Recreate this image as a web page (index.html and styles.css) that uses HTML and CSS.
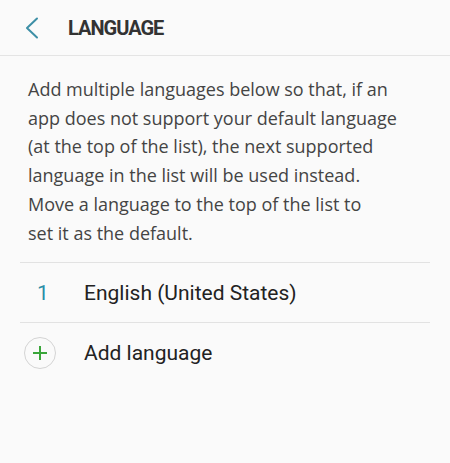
FILE: index.html
```html
<!DOCTYPE html>
<html lang="en">
<head>
  <meta charset="UTF-8">
  <meta name="viewport" content="width=device-width, initial-scale=1.0">
  <title>Language</title>
  <link rel="stylesheet" href="styles.css">
</head>
<body>

  <!-- Top bar -->
  <header class="app-bar">
    <button class="back-btn" type="button" aria-label="Back">
      <svg width="16" height="22" viewBox="0 0 16 22">
        <polyline points="13,1.5 3,11 13,20.5" fill="none" stroke="#3d8fa6" stroke-width="2" stroke-linecap="round" stroke-linejoin="round"/>
      </svg>
    </button>
    <h1 class="title">LANGUAGE</h1>
  </header>

  <!-- Description (line breaks follow the device layout) -->
  <p class="intro">
    Add multiple languages below so that, if an<br>
    app does not support your default language<br>
    (at the top of the list), the next supported<br>
    language in the list will be used instead.<br>
    Move a language to the top of the list to<br>
    set it as the default.
  </p>

  <!-- Language list -->
  <ul class="lang-list">
    <li class="lang-row">
      <span class="lang-num">1</span>
      <span class="lang-name">English (United States)</span>
    </li>
    <li class="lang-row">
      <span class="add-icon">
        <svg width="16" height="16" viewBox="0 0 16 16">
          <path d="M8 1v14M1 8h14" stroke="#3aa63a" stroke-width="2" fill="none"/>
        </svg>
      </span>
      <span class="lang-name">Add language</span>
    </li>
  </ul>

</body>
</html>
```

FILE: styles.css
```css
/* General Reset */
* {
  margin: 0;
  padding: 0;
  box-sizing: border-box;
}

body {
  font-family: Roboto, "Noto Sans", sans-serif;
  background-color: #fafafa;
  color: #222;
}

.app-bar {
  display: flex;
  align-items: center;
  height: 56px;
  border-bottom: 1px solid #e4e4e4;
}

.back-btn {
  display: flex;
  align-items: center;
  justify-content: center;
  width: 44px;
  margin-left: 10px;
  background: none;
  border: none;
}

.title {
  margin-left: 14px;
  font-size: 20px;
  font-weight: bold;
  letter-spacing: -1px;
  color: #333;
}

.intro {
  padding: 19px 10px 15px 28px;
  font-family: "Open Sans", Roboto, sans-serif;
  font-size: 18px;
  line-height: 28.7px;
  color: #444;
  white-space: nowrap;
}

.lang-list {
  list-style: none;
  margin: 0 20px;
}

.lang-row {
  display: flex;
  align-items: center;
  height: 60px;
  border-top: 1px solid #e2e2e2;
  font-size: 21px;
  color: #222;
}

.lang-num {
  width: 64px;
  padding-left: 17px;
  color: #2a8ea8;
}

.add-icon {
  display: flex;
  align-items: center;
  justify-content: center;
  width: 32px;
  height: 32px;
  margin: 0 28px 0 4px;
  border: 1px solid #d4d4d4;
  border-radius: 50%;
}
```
